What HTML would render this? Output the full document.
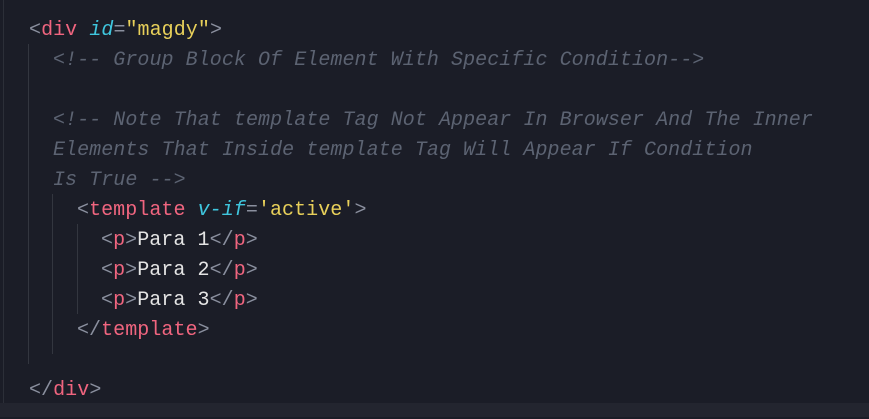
<!DOCTYPE html>
<html><head><style>
body{margin:0;width:869px;height:417px;background:#1b1d27;overflow:hidden;position:relative;font-family:"Liberation Mono",monospace;font-size:20px;letter-spacing:0.06px}
.l{position:absolute;white-space:pre;height:30px;line-height:30px}
.p{color:#8a8f9e}.t{color:#f0657f}.a{color:#3fc6de;font-style:italic}.s{color:#e8d05a}.c{color:#5c6372;font-style:italic}.w{color:#e4e4e4}
.g{position:absolute;width:1px;background:#33363f}
#x{position:absolute;left:0;top:2px;width:869px;height:417px}
</style></head><body>
<div class="g" style="left:3px;top:0;height:417px;background:#2c2f38"></div>
<div class="g" style="left:28px;top:44px;height:320px"></div>
<div class="g" style="left:52px;top:194px;height:160px"></div>
<div class="g" style="left:77px;top:224px;height:90px"></div>
<div style="position:absolute;left:0;top:403px;width:869px;height:14px;background:#23252f"></div>
<div id="x">
<div class="l" style="left:29px;top:14px"><span class="p">&lt;</span><span class="t">div</span> <span class="a">id</span><span class="p">=</span><span class="s">"magdy"</span><span class="p">&gt;</span></div>
<div class="l c" style="left:53px;top:44px">&lt;!-- Group Block Of Element With Specific Condition--&gt;</div>
<div class="l c" style="left:53px;top:104px">&lt;!-- Note That template Tag Not Appear In Browser And The Inner</div>
<div class="l c" style="left:53px;top:134px">Elements That Inside template Tag Will Appear If Condition</div>
<div class="l c" style="left:53px;top:164px">Is True --&gt;</div>
<div class="l" style="left:77px;top:194px"><span class="p">&lt;</span><span class="t">template</span> <span class="a">v-if</span><span class="p">=</span><span class="s">'active'</span><span class="p">&gt;</span></div>
<div class="l" style="left:101px;top:224px"><span class="p">&lt;</span><span class="t">p</span><span class="p">&gt;</span><span class="w">Para 1</span><span class="p">&lt;/</span><span class="t">p</span><span class="p">&gt;</span></div>
<div class="l" style="left:101px;top:254px"><span class="p">&lt;</span><span class="t">p</span><span class="p">&gt;</span><span class="w">Para 2</span><span class="p">&lt;/</span><span class="t">p</span><span class="p">&gt;</span></div>
<div class="l" style="left:101px;top:284px"><span class="p">&lt;</span><span class="t">p</span><span class="p">&gt;</span><span class="w">Para 3</span><span class="p">&lt;/</span><span class="t">p</span><span class="p">&gt;</span></div>
<div class="l" style="left:77px;top:314px"><span class="p">&lt;/</span><span class="t">template</span><span class="p">&gt;</span></div>
<div class="l" style="left:29px;top:374px"><span class="p">&lt;/</span><span class="t">div</span><span class="p">&gt;</span></div>
</div>
</body></html>
